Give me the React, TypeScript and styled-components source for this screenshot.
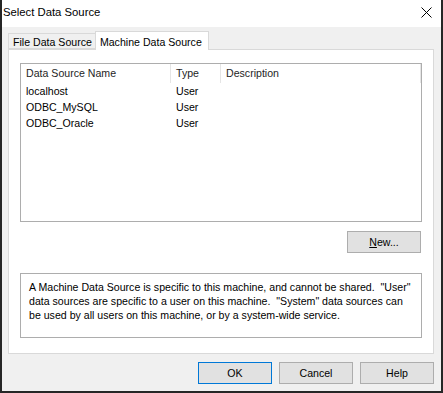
import styled, { createGlobalStyle } from 'styled-components'

const GlobalStyle = createGlobalStyle`
  html, body {
    margin: 0;
    padding: 0;
    background: #1f1f1f;
  }
  * {
    box-sizing: border-box;
  }
`;

// --- Window chrome ---

const Window = styled.div`
  width: 443px;
  height: 393px;
  display: flex;
  flex-direction: column;
  background: #f0f0f0;
  border-left: 2px solid #262626;
  border-right: 2px solid #262626;
  border-bottom: 2px solid #262626;
  font-family: "Liberation Sans", Arial, sans-serif;
  font-size: 10.6px;
  color: #000;
`;

const TitleBar = styled.div`
  height: 27px;
  flex: none;
  background: #ffffff;
  display: flex;
  align-items: center;
  justify-content: space-between;
  padding: 0 9px 0 1px;
`;

const Title = styled.span`
  font-size: 11.3px;
  padding-bottom: 3px;
`;

const CloseButton = styled.div`
  width: 11px;
  height: 11px;
  display: flex;
  margin-bottom: 3px;
`;

const Body = styled.div`
  flex: 1;
  display: flex;
  flex-direction: column;
  padding: 4px 7px 7px 6px;
`;

// --- Tabs ---

const TabStrip = styled.div`
  height: 18px;
  display: flex;
  align-items: flex-end;
  position: relative;
  z-index: 1;
`;

const Tab = styled.div<{ $active?: boolean }>`
  height: ${p => (p.$active ? '19px' : '16px')};
  margin-bottom: ${p => (p.$active ? '-1px' : '0')};
  padding: ${p => (p.$active ? '1px 6px 0 4px' : '1px 3px 0 4px')};
  display: flex;
  align-items: center;
  background: ${p => (p.$active ? '#ffffff' : '#f0f0f0')};
  border: 1px solid #d9d9d9;
  border-bottom: ${p => (p.$active ? 'none' : '1px solid #d9d9d9')};
  border-right: ${p => (p.$active ? '1px solid #d9d9d9' : 'none')};
  white-space: nowrap;
`;

const Panel = styled.div`
  height: 305px;
  background: #ffffff;
  border: 1px solid #d9d9d9;
  padding: 13px 11px 15px 11px;
  display: flex;
  flex-direction: column;
`;

// --- List view ---

const ListBox = styled.div`
  height: 159px;
  border: 1px solid #adadad;
  background: #ffffff;
`;

const HeaderRow = styled.div`
  display: flex;
  height: 19px;
`;

const HeaderCell = styled.div<{ $w: number }>`
  width: ${p => p.$w}px;
  padding: 3px 0 0 5px;
  border-right: 1px solid #e5e5e5;
  color: #1e1e1e;
`;

const Row = styled.div`
  display: flex;
  height: 16px;
  align-items: center;
`;

const Cell = styled.div<{ $w: number }>`
  width: ${p => p.$w}px;
  padding-left: 5px;
`;

// --- Buttons ---

const ButtonRow = styled.div<{ $gap: number }>`
  display: flex;
  justify-content: flex-end;
  gap: ${p => p.$gap}px;
`;

const Button = styled.div<{ $default?: boolean }>`
  width: 74px;
  height: 22px;
  display: flex;
  align-items: center;
  justify-content: center;
  background: #e1e1e1;
  border: 1px solid ${p => (p.$default ? '#0078d7' : '#adadad')};
  color: #000;
`;

const NewRow = styled(ButtonRow)`
  margin-top: 9px;
  padding-right: 1px;
`;

const InfoBox = styled.div`
  margin-top: auto;
  height: 65px;
  border: 1px solid #adadad;
  padding: 6px 8px 0 8px;
  line-height: 14px;
  white-space: nowrap;
  color: #000;
`;

const Footer = styled(ButtonRow)`
  margin-top: auto;
`;

const columns = [150, 50, 200]

const rows = [
  ['localhost', 'User', ''],
  ['ODBC_MySQL', 'User', ''],
  ['ODBC_Oracle', 'User', ''],
]

export default function App() {
  return (
    <>
      <GlobalStyle />
      <Window>
        <TitleBar>
          <Title>Select Data Source</Title>
          <CloseButton>
            <svg width="11" height="11" viewBox="0 0 11 11">
              <path d="M0.5 0.5 L10.5 10.5 M10.5 0.5 L0.5 10.5" stroke="#000" strokeWidth="1" fill="none" />
            </svg>
          </CloseButton>
        </TitleBar>
        <Body>
          <TabStrip>
            <Tab>File Data Source</Tab>
            <Tab $active>Machine Data Source</Tab>
          </TabStrip>
          <Panel>
            <ListBox>
              <HeaderRow>
                <HeaderCell $w={columns[0]}>Data Source Name</HeaderCell>
                <HeaderCell $w={columns[1]}>Type</HeaderCell>
                <HeaderCell $w={columns[2]}>Description</HeaderCell>
              </HeaderRow>
              {rows.map(r => (
                <Row key={r[0]}>
                  <Cell $w={columns[0]}>{r[0]}</Cell>
                  <Cell $w={columns[1]}>{r[1]}</Cell>
                  <Cell $w={columns[2]}>{r[2]}</Cell>
                </Row>
              ))}
            </ListBox>
            <NewRow $gap={0}>
              <Button>
                <span><u>N</u>ew...</span>
              </Button>
            </NewRow>
            <InfoBox>
              A Machine Data Source is specific to this machine, and cannot be shared.&nbsp; "User"
              <br />
              data sources are specific to a user on this machine.&nbsp; "System" data sources can
              <br />
              be used by all users on this machine, or by a system-wide service.
            </InfoBox>
          </Panel>
          <Footer $gap={7}>
            <Button $default>OK</Button>
            <Button>Cancel</Button>
            <Button>Help</Button>
          </Footer>
        </Body>
      </Window>
    </>
  )
}
